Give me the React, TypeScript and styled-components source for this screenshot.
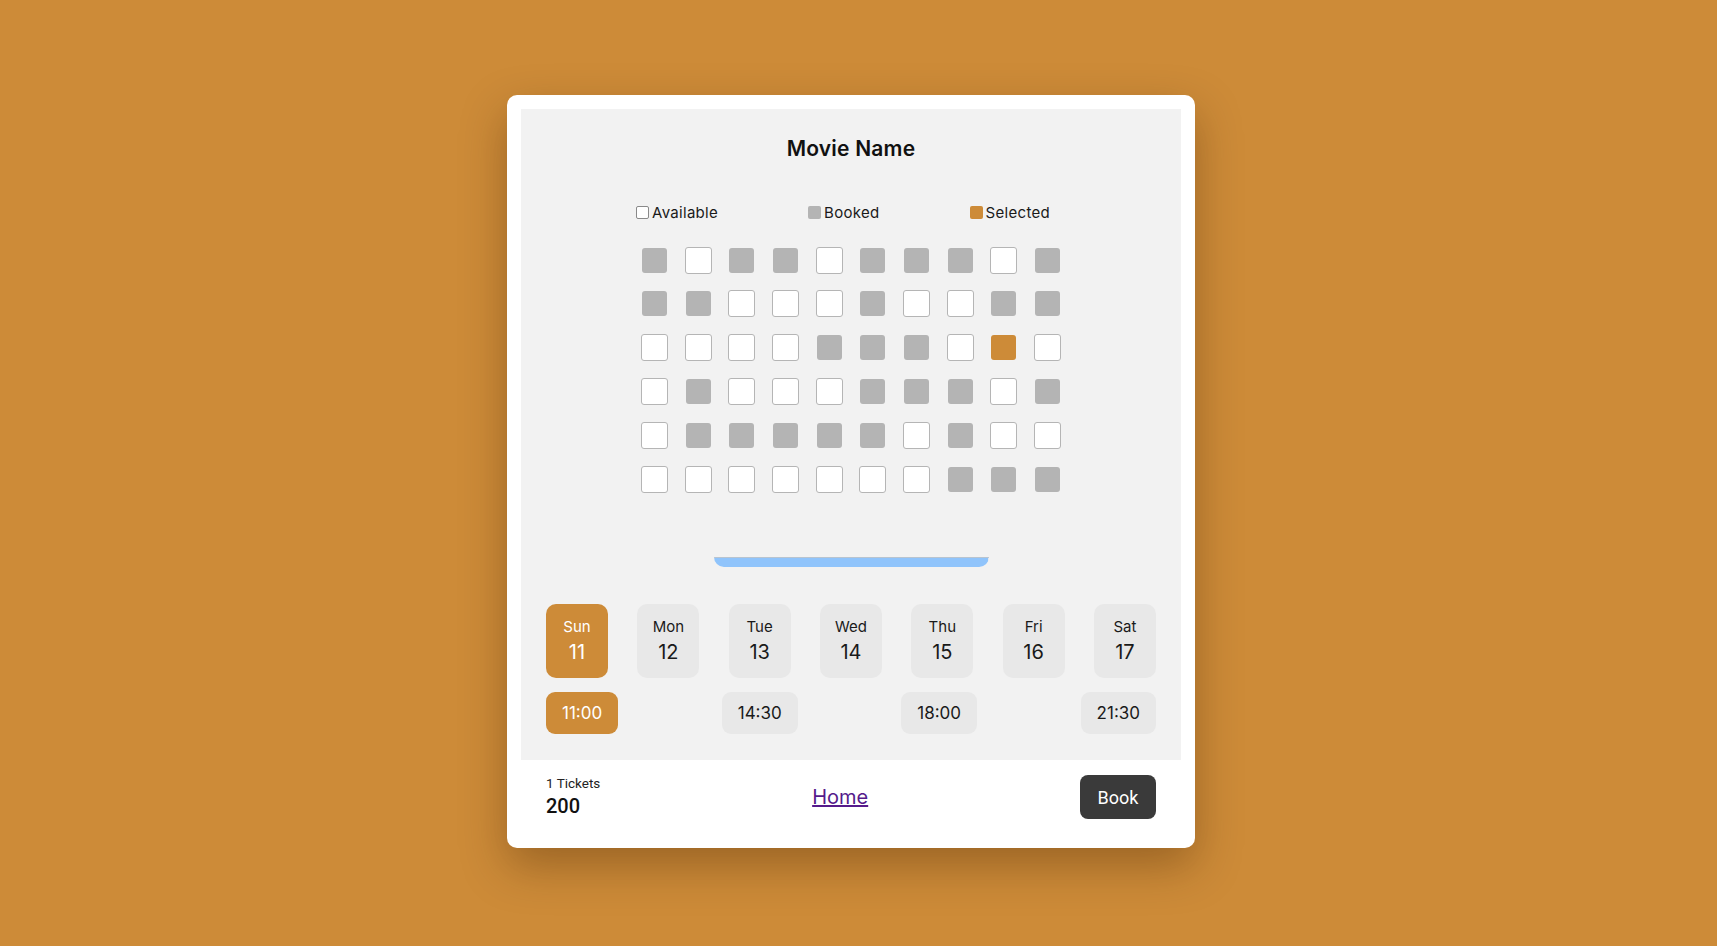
import React from "react";
import styled, { createGlobalStyle } from "styled-components";

const GlobalStyle = createGlobalStyle`
  html, body { margin: 0; padding: 0; }
  body {
    background: #cd8b38;
    font-family: "Inter", "Open Sans", sans-serif;
    color: #111;
  }
  * { box-sizing: border-box; }
`;

const Page = styled.div`
  min-height: 100vh;
  display: flex;
  align-items: center;
  justify-content: center;
  padding: 0 15px 3px 0;
`;

const Card = styled.div`
  width: 688px;
  background: #fff;
  border-radius: 10px;
  padding: 14px;
  box-shadow: 0 18px 45px rgba(60, 30, 0, 0.35);
  display: flex;
  flex-direction: column;
`;

const Panel = styled.div`
  background: #f2f2f2;
  padding: 0 25px 25.7px;
  display: flex;
  flex-direction: column;
`;

const Title = styled.h1`
  margin: 25px 0 0;
  font-size: 21px;
  line-height: 30px;
  font-weight: 600;
  text-align: center;
  letter-spacing: 0.2px;
`;

const Legend = styled.div`
  margin-top: 38.5px;
  display: flex;
  justify-content: space-between;
  padding: 0 106px 0 90px;
  height: 20px;
  align-items: center;
`;

const LegendItem = styled.div`
  display: flex;
  align-items: center;
  gap: 3px;
  font-size: 15px;
  letter-spacing: 0.3px;
  color: #1a1a1a;
`;

const Swatch = styled.span<{ $kind: "A" | "B" | "S" }>`
  width: 13px;
  height: 13px;
  border-radius: 2px;
  background: ${(p) => (p.$kind === "A" ? "#fff" : p.$kind === "B" ? "#b4b4b4" : "#cd8b38")};
  border: ${(p) => (p.$kind === "A" ? "1px solid #8a8a8a" : "none")};
`;

const SeatGrid = styled.div`
  margin-top: 24.5px;
  display: grid;
  grid-template-columns: repeat(10, 27px);
  grid-auto-rows: 27px;
  column-gap: 16.7px;
  row-gap: 16.86px;
  justify-content: center;
`;

const Cell = styled.div`
  display: flex;
  align-items: center;
  justify-content: center;
`;

const Seat = styled.div<{ $kind: string }>`
  width: ${(p) => (p.$kind === "A" ? "27px" : "25px")};
  height: ${(p) => (p.$kind === "A" ? "27px" : "25px")};
  border-radius: 3px;
  background: ${(p) => (p.$kind === "A" ? "#fff" : p.$kind === "B" ? "#b4b4b4" : "#cd8b38")};
  border: ${(p) => (p.$kind === "A" ? "1px solid #b5b5b5" : "none")};
`;

const Screen = styled.div`
  margin: 64.2px auto 0;
  width: 275px;
  height: 10px;
  background: #90c4fb;
  border-radius: 0 0 12px 12px;
  border-top: 1px solid #b8c4d0;
`;

const Days = styled.div`
  margin-top: 37px;
  display: flex;
  justify-content: space-between;
`;

const Day = styled.div<{ $active?: boolean }>`
  width: 62px;
  height: 74.3px;
  border-radius: 10px;
  background: ${(p) => (p.$active ? "#cd8b38" : "#e8e8e8")};
  color: ${(p) => (p.$active ? "#fff" : "#1a1a1a")};
  display: flex;
  flex-direction: column;
  align-items: center;
  justify-content: center;
  gap: 4px;
`;

const DayName = styled.span`
  font-size: 15px;
  line-height: 18px;
`;

const DayNum = styled.span`
  font-size: 20px;
  line-height: 24px;
`;

const Times = styled.div`
  margin-top: 13.7px;
  display: flex;
  justify-content: space-between;
`;

const Time = styled.div<{ $active?: boolean }>`
  height: 42.3px;
  padding: 0 16px;
  border-radius: 9px;
  display: flex;
  align-items: center;
  font-size: 17px;
  background: ${(p) => (p.$active ? "#cd8b38" : "#e8e8e8")};
  color: ${(p) => (p.$active ? "#fff" : "#1a1a1a")};
`;

const Footer = styled.div`
  height: 74.3px;
  padding: 0 25px;
  display: flex;
  align-items: center;
  justify-content: space-between;
`;

const Summary = styled.div`
  display: flex;
  flex-direction: column;
  font-family: "Roboto", sans-serif;
`;

const Count = styled.span`
  font-size: 13.5px;
  line-height: 18px;
  color: #222;
`;

const Price = styled.span`
  font-size: 20px;
  line-height: 28px;
  font-weight: 500;
  color: #111;
`;

const HomeLink = styled.a`
  font-size: 20px;
  color: #551a8b;
  text-decoration: underline;
  cursor: pointer;
`;

const BookButton = styled.button`
  width: 76px;
  height: 44px;
  border: none;
  border-radius: 8px;
  background: #3a3a3a;
  color: #fff;
  font-family: "Roboto", sans-serif;
  font-size: 18px;
  cursor: pointer;
`;

const rows = [
  "BABBABBBAB",
  "BBAAABAABB",
  "AAAABBBASA",
  "ABAAABBBAB",
  "ABBBBBABAA",
  "AAAAAAABBB",
];

const days = [
  ["Sun", "11"],
  ["Mon", "12"],
  ["Tue", "13"],
  ["Wed", "14"],
  ["Thu", "15"],
  ["Fri", "16"],
  ["Sat", "17"],
];

const times = ["11:00", "14:30", "18:00", "21:30"];

export default function App() {
  return (
    <>
      <GlobalStyle />
      <Page>
        <Card>
          <Panel>
            <Title>Movie Name</Title>
            <Legend>
              <LegendItem>
                <Swatch $kind="A" />
                Available
              </LegendItem>
              <LegendItem>
                <Swatch $kind="B" />
                Booked
              </LegendItem>
              <LegendItem>
                <Swatch $kind="S" />
                Selected
              </LegendItem>
            </Legend>
            <SeatGrid>
              {rows.map((r, ri) =>
                r.split("").map((k, ci) => (
                  <Cell key={`${ri}-${ci}`}>
                    <Seat $kind={k} />
                  </Cell>
                ))
              )}
            </SeatGrid>
            <Screen />
            <Days>
              {days.map(([n, d], i) => (
                <Day key={n} $active={i === 0}>
                  <DayName>{n}</DayName>
                  <DayNum>{d}</DayNum>
                </Day>
              ))}
            </Days>
            <Times>
              {times.map((t, i) => (
                <Time key={t} $active={i === 0}>
                  {t}
                </Time>
              ))}
            </Times>
          </Panel>
          <Footer>
            <Summary>
              <Count>1 Tickets</Count>
              <Price>200</Price>
            </Summary>
            <HomeLink>Home</HomeLink>
            <BookButton>Book</BookButton>
          </Footer>
        </Card>
      </Page>
    </>
  );
}
